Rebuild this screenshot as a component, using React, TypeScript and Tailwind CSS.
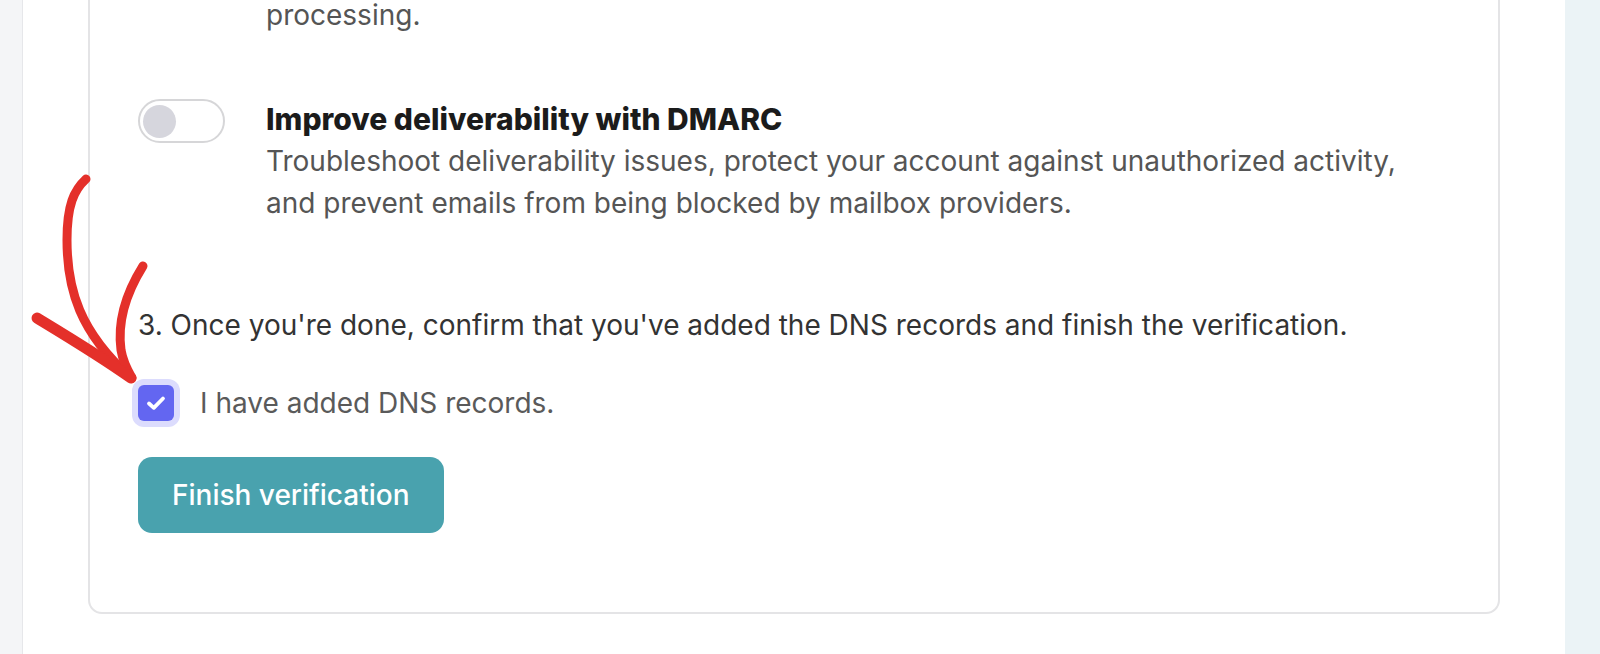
import { type FC } from "react";

const Toggle: FC = () => (
  <div className="flex h-[44px] w-[87px] shrink-0 items-center rounded-full border-2 border-[#d6d6d8] bg-white px-[3px]">
    <div className="h-[33px] w-[33px] rounded-full bg-[#d6d6dd]" />
  </div>
);

const Arrow: FC = () => (
  <svg
    className="pointer-events-none absolute left-0 top-0"
    width="170"
    height="400"
    viewBox="0 0 170 400"
    fill="none"
    stroke="#e4302a"
    strokeLinecap="round"
    strokeLinejoin="round"
  >
    <path d="M86 179 C 74 190 67 205 67 240 C 67 290 80 332 130 377" strokeWidth="9" />
    <path d="M143 266 C 128 290 117 320 121 350 C 123 362 128 371 132 378" strokeWidth="9" />
    <path d="M37 318 C 65 335 100 356 131 378" strokeWidth="11" />
  </svg>
);

export default function App() {
  return (
    <div className="relative flex h-[654px] w-full overflow-hidden bg-white font-['Inter',sans-serif]">
      <div className="w-[23px] shrink-0 border-r border-[#e6e7ea] bg-[#f4f5f7]" />
      <main className="flex min-w-0 flex-1 flex-col justify-end overflow-hidden bg-white pb-[40px] pl-[65px]">
        <div className="w-[1412px] rounded-[14px] border-2 border-[#e4e4e6] pb-[79px] pl-[48px] pr-[40px]">
          {/* previous option, clipped at top */}
          <div className="flex gap-[41px]">
            <div className="w-[87px] shrink-0" />
            <p className="text-[28px] leading-[42px] text-[#555]">
              Automatically send your domain's records to our partner for faster
              <br />
              processing.
            </p>
          </div>

          <div className="mt-[62px] flex items-start gap-[41px]">
            <div className="pt-[1px]">
              <Toggle />
            </div>
            <div>
              <h3 className="text-[30px] font-extrabold leading-[42px] text-[#1b1b1b]">
                Improve deliverability with DMARC
              </h3>
              <p className="text-[28px] leading-[42px] text-[#555]">
                Troubleshoot deliverability issues, protect your account against unauthorized activity,
                <br />
                and prevent emails from being blocked by mailbox providers.
              </p>
            </div>
          </div>

          <p className="mt-[80px] text-[28px] leading-[42px] text-[#333]">
            3. Once you're done, confirm that you've added the DNS records and finish the verification.
          </p>

          <label className="mt-[36px] flex items-center gap-[26px]">
            <span className="flex h-[36px] w-[36px] items-center justify-center rounded-[6px] bg-[#6366f1] ring-[6px] ring-[#dcdcfd]">
              <svg width="22" height="18" viewBox="0 0 22 18" fill="none">
                <path d="M4 9.5 L8.8 13.8 L18 4.5" stroke="white" strokeWidth="3.8" strokeLinecap="round" strokeLinejoin="round" />
              </svg>
            </span>
            <span className="text-[28px] leading-[42px] text-[#5a5a5a]">I have added DNS records.</span>
          </label>

          <button className="mt-[33px] h-[76px] rounded-[14px] bg-[#49a2ae] px-[34px] text-[28px] font-medium text-white">
            Finish verification
          </button>
        </div>
      </main>
      <div className="w-[35px] shrink-0 bg-[#ebf3f6]" />
      <Arrow />
    </div>
  );
}
